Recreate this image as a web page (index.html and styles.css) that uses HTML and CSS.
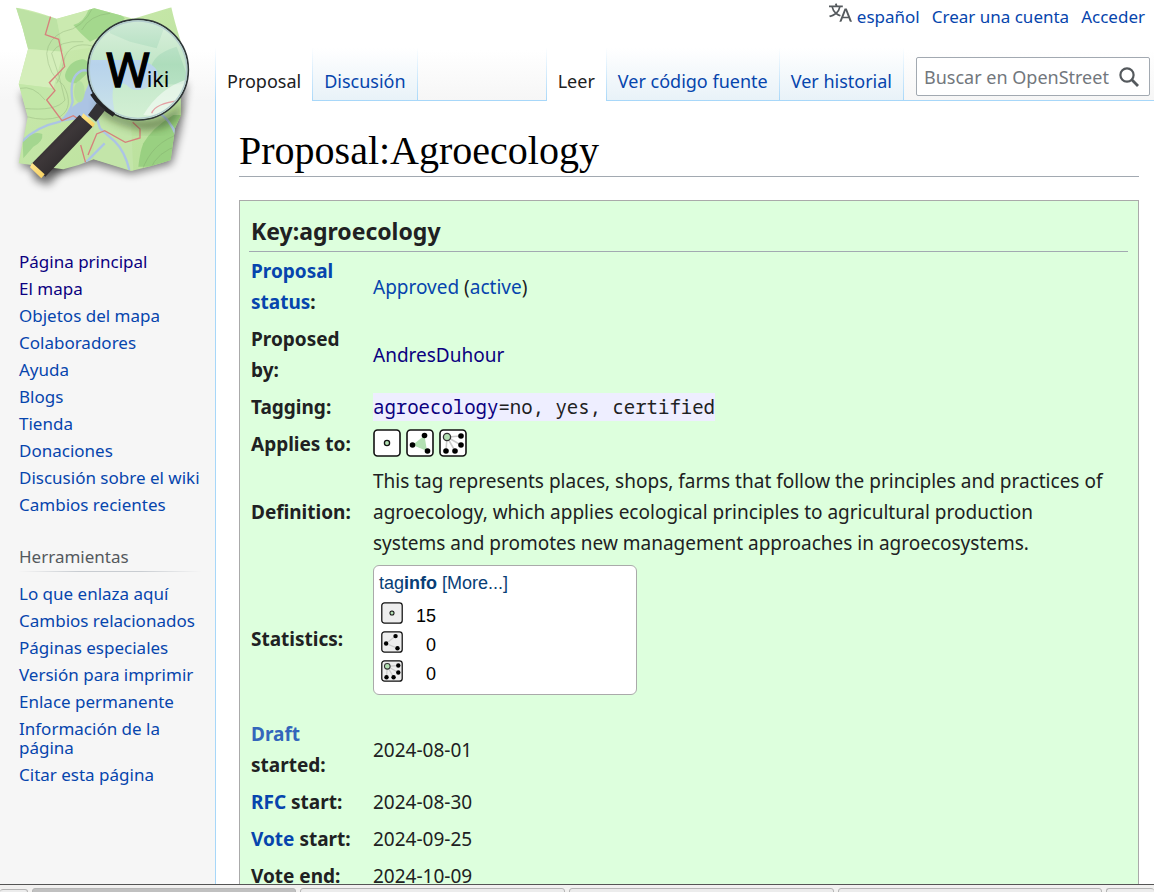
FILE: index.html
```html
<!DOCTYPE html>
<html lang="es">
<head>
<meta charset="utf-8">
<title>Proposal:Agroecology - OpenStreetMap Wiki</title>
<link rel="stylesheet" href="styles.css">
</head>
<body>
<svg class="defs" aria-hidden="true">
  <defs>
    <symbol id="node" viewBox="0 0 28 28"><rect x="1" y="1" width="26" height="26" rx="3.5" stroke="#111" stroke-width="1.6"/><circle cx="14" cy="14" r="2.6" fill="#b3e0b3" stroke="#111" stroke-width="1.3"/></symbol>
    <symbol id="way" viewBox="0 0 28 28"><rect x="1" y="1" width="26" height="26" rx="3.5" stroke="#111" stroke-width="1.6"/><path d="M18.5 6.5L6.5 16L21 22" fill="none" stroke="#ccc" stroke-width="1.6"/><g fill="#000"><circle cx="18.5" cy="6.5" r="2.8"/><circle cx="6.5" cy="16" r="2.8"/><circle cx="21" cy="22" r="2.8"/></g></symbol>
    <symbol id="area" viewBox="0 0 28 28"><rect x="1" y="1" width="26" height="26" rx="3.5" stroke="#111" stroke-width="1.6"/><path d="M18.5 6.5L6.5 16L21 22Z" fill="#b3e0b3"/><g fill="#000"><circle cx="18.5" cy="6.5" r="2.8"/><circle cx="6.5" cy="16" r="2.8"/><circle cx="21.5" cy="22" r="2.8"/></g></symbol>
    <symbol id="relation" viewBox="0 0 28 28"><rect x="1" y="1" width="26" height="26" rx="3.5" stroke="#111" stroke-width="1.6"/><path d="M8 8L22 7M8 8L22 16M8 8L16 22M8 8L7 22" stroke="#ccc" stroke-width="1.6"/><circle cx="8" cy="8" r="3.6" fill="#b3e0b3" stroke="#333" stroke-width="1.3"/><g fill="#000"><circle cx="22" cy="7" r="2.8"/><circle cx="22" cy="16" r="2.8"/><circle cx="16" cy="22" r="2.8"/><circle cx="7" cy="22" r="2.8"/></g></symbol>
  </defs>
</svg>
<div class="page">
  <aside class="sidebar">
    <a class="logo" href="#" aria-label="Página principal">
      <svg viewBox="0 0 648 600">
        <defs>
          <linearGradient id="paper" x1="0" y1="0" x2="1" y2="1"><stop offset="0" stop-color="#cdebb0"/><stop offset="1" stop-color="#b9e09b"/></linearGradient>
          <linearGradient id="handle" x1="0" y1="0" x2="1" y2="1"><stop offset="0" stop-color="#1c1a1b"/><stop offset=".45" stop-color="#3d3739"/><stop offset="1" stop-color="#1a191a"/></linearGradient>
          <linearGradient id="gold" x1="0" y1="0" x2="1" y2="1"><stop offset="0" stop-color="#d99a10"/><stop offset=".4" stop-color="#ffe58a"/><stop offset="1" stop-color="#e8a912"/></linearGradient>
          <linearGradient id="glass" x1="0" y1="0" x2="0" y2="1"><stop offset="0" stop-color="#fff" stop-opacity=".55"/><stop offset=".45" stop-color="#e0f5ee" stop-opacity=".3"/><stop offset="1" stop-color="#e8fbe8" stop-opacity=".6"/></linearGradient>
          <filter id="soft" x="-20%" y="-20%" width="140%" height="140%"><feGaussianBlur stdDeviation="12"/></filter>
          <clipPath id="sheet"><path d="M48 23Q90 28 170 56L283 25L400 56L514 22Q522 60 541 120L543 345L525 385L512 480Q460 498 393 513L281 478Q235 498 190 508L56 490L83 350L56 252L84 147Q70 85 48 23Z"/></clipPath>
          <clipPath id="lens"><circle cx="414" cy="209" r="150"/></clipPath>
        </defs>
        <path d="M62 280L86 360L62 500L190 516L281 492L393 522L515 492L543 380L560 250Z" fill="#000" opacity=".5" filter="url(#soft)"/>
        <path d="M95 505L250 380L285 400L145 555L105 540Z" fill="#000" opacity=".55" filter="url(#soft)"/>
        <g clip-path="url(#sheet)">
          <path d="M40 10H550V520H40Z" fill="url(#paper)"/>
          <path d="M48 23L170 56L190 155L84 147Z" fill="#bde2a4"/>
          <path d="M84 147L190 155L160 265L56 252Z" fill="#d4eeba"/>
          <path d="M170 56L283 25L290 140L190 155Z" fill="#cbeab0"/>
          <path d="M56 252L160 265L185 360L83 350Z" fill="#c3e7a8"/>
          <path d="M281 330L393 370L400 513L281 478Z" fill="#c3e5a9"/>
          <path d="M220 75Q250 70 268 25L330 20L375 55L330 95L270 125Q240 100 220 75Z" fill="#a4d88d"/>
          <path d="M195 225Q205 185 245 178Q270 175 262 220L230 250Q195 250 195 225Z" fill="#a2d68d"/>
          <path d="M430 430Q455 385 520 345H550V500H415Q420 455 430 430Z" fill="#99d081"/>
          <path d="M68 425Q95 390 127 402Q130 425 100 440L70 475Z" fill="#a4d68f"/>
          <path d="M65 425Q110 380 180 365Q210 340 218 305Q205 230 245 212Q275 205 278 240L270 290L300 385L345 425Q375 455 388 510M245 500L314 430M470 335Q510 355 530 410" fill="none" stroke="#acc4e4" stroke-width="7"/>
          <path d="M245 300L275 230L330 300L300 340L278 350L185 365L218 320Z" fill="#acc4e4"/>
          <ellipse cx="238" cy="275" rx="16" ry="32" fill="#b5dfa0"/>
          <g fill="none" stroke="#7a9b66" stroke-width="2" opacity=".45"><path d="M280 20Q250 85 190 95Q145 115 140 160Q145 225 190 255Q225 320 180 350Q135 365 80 350"/><path d="M250 125Q175 120 155 160Q180 230 195 300Q170 335 70 325"/><path d="M300 145Q220 115 195 170Q180 235 170 250M245 90Q270 45 330 40M60 265Q100 255 135 300"/><path d="M425 515Q455 425 545 400M450 510Q470 455 540 435"/></g>
          <path d="M153 45L136 104L176 118L194 200L148 248L165 272L140 300L186 362L220 347L255 370M260 500L242 435M264 465L290 402L314 392L376 427L420 414V387L398 367" fill="none" stroke="#d6817c" stroke-width="4"/>
        </g>
        <path d="M286 305L365 350Q480 385 545 310Q540 390 430 390Q360 380 300 340Z" fill="#203010" opacity=".5" filter="url(#soft)"/>
        <g clip-path="url(#lens)">
          <circle cx="414" cy="209" r="150" fill="#b5e0b7"/>
          <path d="M330 60Q430 30 490 90L470 145L390 125L330 100ZM460 240Q430 170 530 140L570 250Q500 260 460 240Z" fill="#98d2a6"/>
          <path d="M270 180Q350 180 420 180Q490 200 470 245Q410 290 380 255Q320 225 345 340L290 310L262 250Z" fill="#a6c4ea"/>
          <circle cx="414" cy="209" r="150" fill="url(#glass)"/>
          <path d="M430 345Q480 260 570 235V360Z" fill="#fff" opacity=".5"/>
          <path d="M455 340Q465 310 540 302" fill="none" stroke="#e4a0a4" stroke-width="4"/>
        </g>
        <circle cx="414" cy="209" r="151" fill="none" stroke="#2e3638" stroke-width="5"/>
        <circle cx="414" cy="209" r="146" fill="none" stroke="#b3cccd" stroke-width="4"/>
        <path d="M276 281Q300 319 342 345" fill="none" stroke="#242426" stroke-width="13"/>
        <path d="M290 310L316 330L288 365L264 345Z" fill="#333134"/>
        <path d="M238 345L280 378L136 530L94 492Z" fill="url(#handle)"/>
        <path d="M250 340L285 371L279 382L244 351ZM96 488L134 523L124 535L90 502Z" fill="url(#gold)"/>
        <text class="logo-text" x="319" y="262" font-size="140" stroke="#000" stroke-width="4">W</text>
        <text class="logo-text" x="440" y="262" font-size="65">iki</text>
      </svg>
    </a>
    <nav class="links" aria-label="Navegación">
      <a class="seen" href="#">Página principal</a>
      <a class="seen" href="#">El mapa</a>
      <a href="#">Objetos del mapa</a>
      <a href="#">Colaboradores</a>
      <a href="#">Ayuda</a>
      <a href="#">Blogs</a>
      <a href="#">Tienda</a>
      <a href="#">Donaciones</a>
      <a href="#">Discusión sobre el wiki</a>
      <a href="#">Cambios recientes</a>
    </nav>
    <h3 class="side-title">Herramientas</h3>
    <nav class="links" aria-label="Herramientas">
      <a href="#">Lo que enlaza aquí</a>
      <a href="#">Cambios relacionados</a>
      <a href="#">Páginas especiales</a>
      <a href="#">Versión para imprimir</a>
      <a href="#">Enlace permanente</a>
      <a href="#">Información de la página</a>
      <a href="#">Citar esta página</a>
    </nav>
  </aside>
  <div class="column">
    <header class="head">
      <nav class="personal" aria-label="Herramientas personales">
        <a class="lang" href="#"><svg viewBox="0 0 20 20" width="23" height="23" fill="#54595d"><path d="M20 18h-1.44a.61.61 0 0 1-.4-.12.81.81 0 0 1-.23-.31L17 15h-5l-1 2.54a.77.77 0 0 1-.22.3.59.59 0 0 1-.4.14H9l4.55-11.47h1.89zm-3.53-4.31L14.89 9.5a11.62 11.62 0 0 1-.39-1.24q-.09.37-.19.69l-.19.56-1.58 4.19zm-6.3-1.58a13.43 13.43 0 0 1-2.91-1.41 11.46 11.46 0 0 0 2.81-5.37H12V4H7.31a4 4 0 0 0-.2-.56C6.87 2.79 6.6 2 6.6 2l-1.47.5s.4.89.6 1.5H0v1.33h2.15A11.23 11.23 0 0 0 5 10.7a17.19 17.19 0 0 1-5 2.1q.56.82.87 1.38a23.28 23.28 0 0 0 5.22-2.51 15.64 15.64 0 0 0 3.56 1.77zM3.63 5.33h4.91a8.11 8.11 0 0 1-2.45 4.45 9.11 9.11 0 0 1-2.46-4.45z"/></svg>español</a>
        <a href="#">Crear una cuenta</a>
        <a href="#">Acceder</a>
      </nav>
      <div class="bar">
        <nav class="tabs" aria-label="Espacios de nombres">
          <a class="tab current" href="#">Proposal</a><a class="tab" href="#">Discusión</a>
        </nav>
        <nav class="tabs views" aria-label="Vistas">
          <a class="tab current" href="#">Leer</a><a class="tab" href="#">Ver código fuente</a><a class="tab" href="#">Ver historial</a>
        </nav>
        <form class="search">
          <input type="text" aria-label="Buscar" placeholder="Buscar en OpenStreet">
          <button type="button" aria-label="Buscar"><svg viewBox="0 0 20 20" width="20" height="20" fill="none" stroke="#54595d" stroke-width="2.2"><circle cx="8" cy="8" r="6.6"/><path d="M12.6 12.6L19 19" stroke-width="2.8"/></svg></button>
        </form>
      </div>
    </header>
    <main class="content">
      <h1>Proposal:Agroecology</h1>
      <section class="box">
        <h2>Key:agroecology</h2>
        <table class="facts">
          <tr><th scope="row"><a href="#">Proposal status</a>:</th><td><a href="#">Approved</a> (<a href="#">active</a>)</td></tr>
          <tr><th scope="row">Proposed by:</th><td><a class="seen" href="#">AndresDuhour</a></td></tr>
          <tr><th scope="row">Tagging:</th><td><code><a class="seen" href="#">agroecology</a>=no, yes, certified</code></td></tr>
          <tr><th scope="row">Applies to:</th><td><div class="icons"><svg><use href="#node"/></svg><svg><use href="#area"/></svg><svg><use href="#relation"/></svg></div></td></tr>
          <tr><th scope="row">Definition:</th><td class="prose">This tag represents places, shops, farms that follow the principles and practices of agroecology, which applies ecological principles to agricultural production systems and promotes new management approaches in agroecosystems.</td></tr>
          <tr><th scope="row">Statistics:</th><td class="stats">
            <div class="taginfo">
              <a href="#">tag<b>info</b> [More...]</a>
              <div class="count"><svg><use href="#node"/></svg><span>15</span></div>
              <div class="count"><svg><use href="#way"/></svg><span>0</span></div>
              <div class="count"><svg><use href="#relation"/></svg><span>0</span></div>
            </div></td></tr>
          <tr><th scope="row"><a class="outside" href="#">Draft</a> started:</th><td>2024-08-01</td></tr>
          <tr><th scope="row"><a href="#">RFC</a> start:</th><td>2024-08-30</td></tr>
          <tr><th scope="row"><a href="#">Vote</a> start:</th><td>2024-09-25</td></tr>
          <tr><th scope="row">Vote end:</th><td>2024-10-09</td></tr>
        </table>
      </section>
    </main>
  </div>
</div>
<div class="taskbar"><i class="stub"></i><i class="active"></i><i></i><i></i><i></i><i class="last"></i></div>
</body>
</html>
```
FILE: styles.css
```css
* { box-sizing: border-box; }
body {
  margin: 0;
  height: 100vh;
  display: flex;
  flex-direction: column;
  overflow: hidden;
  background: #fff;
  color: #202122;
  font-family: "Noto Sans", sans-serif;
  font-size: 19px;
}
a { color: #0645ad; text-decoration: none; }
a.seen { color: #0b0080; }
a.outside { color: #3366bb; }
.defs { position: absolute; width: 0; height: 0; }
.page {
  flex: 1;
  min-height: 0;
  display: flex;
  overflow: hidden;
  background: #f6f6f6 linear-gradient(#fff 50%, #f6f6f6) 0 0 / 100% 100px no-repeat;
}

.sidebar { flex: none; width: 215px; font-size: 17px; }
.logo { display: block; height: 248px; }
.logo svg { display: block; width: 216px; height: 200px; }
.logo-text { font-family: "Noto Sans", sans-serif; }
.links { display: flex; flex-direction: column; padding: 0 8px 0 19px; line-height: 19px; }
.links a { padding: 4px 0; }
.side-title {
  margin: 25px 14px 8px 19px;
  padding: 2px 0;
  font-size: 17px;
  font-weight: 400;
  line-height: 24px;
  color: #54595d;
  border-bottom: 1px solid;
  border-image: linear-gradient(to right, #f6f6f6, #c8ccd1 33%, #c8ccd1 66%, #f6f6f6) 1;
}

.column { flex: 1; min-width: 0; display: flex; flex-direction: column; }
.head { flex: none; height: 101px; display: flex; flex-direction: column; }
.personal {
  height: 48px;
  padding: 5px 9px 0 0;
  display: flex;
  justify-content: flex-end;
  gap: 12px;
  font-size: 17px;
  line-height: 24px;
}
.lang { display: flex; gap: 5px; }
.lang svg { margin-top: -4px; }
.bar { height: 53px; display: flex; border-bottom: 1px solid #a7d7f9; }
.tabs { display: flex; height: 53px; border-left: 1px solid; border-image: linear-gradient(#fff, #a7d7f9) 1; }
.views { margin-left: auto; }
.tab {
  padding: 19px 11px 0;
  font-size: 18px;
  line-height: 28px;
  white-space: nowrap;
  background: linear-gradient(#fff, #e8f2f8);
  border-right: 1px solid;
  border-bottom: 1px solid;
  border-image: linear-gradient(#fff, #a7d7f9) 1;
}
.tab.current { color: #202122; background: #fff; border-bottom: 0; }
.search {
  width: 234px;
  height: 39px;
  margin: 9px 4px 0 12px;
  display: flex;
  align-items: center;
  background: #fff;
  border: 1px solid #a2a9b1;
  border-radius: 2px;
}
.search input {
  flex: 1;
  min-width: 0;
  padding: 0 0 0 7px;
  border: 0;
  outline: 0;
  background: none;
  font: 18px "Noto Sans", sans-serif;
}
.search input::placeholder { color: #72777d; opacity: 1; }
.search button { display: flex; padding: 0 10px 0 8px; border: 0; background: none; }

.content {
  flex: 1;
  padding: 24px 15px 0 23px;
  background: #fff;
  border-left: 1px solid #a7d7f9;
}
h1 {
  margin: 0 0 23px;
  font: 40px/51px "Linux Libertine", "Liberation Serif", serif;
  color: #000;
  border-bottom: 1px solid #a2a9b1;
}
.box { padding: 8px 10px 8px 9px; background: #ddffdd; border: 1px solid #aaa; }
h2 {
  margin: 0 0 1px;
  padding: 3px 2px 1px;
  font-size: 23px;
  line-height: 38px;
  border-bottom: 1px solid #a2a9b1;
}
.facts { width: 100%; border-collapse: collapse; line-height: 31px; }
.facts th { width: 122px; padding: 3px 18px 3px 2px; text-align: left; }
.facts td { padding: 3px 2px; }
.facts .prose { padding-right: 20px; }
code { padding: 1px 0; background: #eeeeff; font: 19px/31px "Noto Sans Mono", "DejaVu Sans Mono", monospace; }
.icons { display: flex; gap: 5px; fill: #fff; }
.icons svg { width: 28px; height: 28px; margin-bottom: 3px; }
.facts .stats { padding: 3px 2px 21px; }
.taginfo {
  width: 264px;
  height: 130px;
  padding: 5px;
  background: #fff;
  border: 1px solid #aaa;
  border-radius: 6px;
  font: 18px/24px "Liberation Sans", sans-serif;
  color: #000;
}
.taginfo a { display: block; margin-bottom: 7px; color: #083e76; }
.count { display: flex; height: 29px; padding-left: 2px; }
.count svg { width: 22px; height: 22px; fill: #eee; }
.count span { width: 33px; padding-top: 2px; text-align: right; }

.taskbar {
  flex: none;
  height: 8px;
  display: flex;
  gap: 4px;
  padding-top: 3px;
  overflow: hidden;
  background: #f2f1f0;
  border-top: 1px solid #555;
}
.taskbar i { flex: 265 0 0; height: 24px; background: #ececec; border: 1px solid #b5b5b5; border-radius: 3px; }
.taskbar .stub { flex: 27 0 0; margin-top: 1px; border-left: 0; }
.taskbar .active { background: #c0c0c0; }
.taskbar .last { flex: 47 0 0; border-right: 0; }
```
